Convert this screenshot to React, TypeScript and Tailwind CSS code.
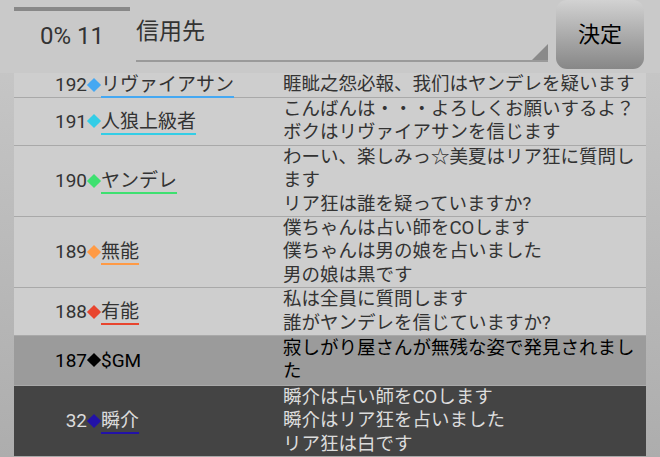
type Row = {
  no: number;
  color: string;
  name: string;
  lines: string[];
  kind?: "gm" | "dark";
  h?: string;
};

const rows: Row[] = [
  { no: 192, color: "decoration-[#45a8f2]", name: "リヴァイアサン", lines: ["睚眦之怨必報、我们はヤンデレを疑います"], h: "h-[25px]" },
  { no: 191, color: "decoration-[#33cde6]", name: "人狼上級者", lines: ["こんばんは・・・よろしくお願いするよ？", "ボクはリヴァイアサンを信じます"] },
  { no: 190, color: "decoration-[#3ee070]", name: "ヤンデレ", lines: ["わーい、楽しみっ☆美夏はリア狂に質問します", "リア狂は誰を疑っていますか?"] },
  { no: 189, color: "decoration-[#ff9a45]", name: "無能", lines: ["僕ちゃんは占い師をCOします", "僕ちゃんは男の娘を占いました", "男の娘は黒です"] },
  { no: 188, color: "decoration-[#e8452e]", name: "有能", lines: ["私は全員に質問します", "誰がヤンデレを信じていますか?"] },
  { no: 187, color: "", name: "$GM", lines: ["寂しがり屋さんが無残な姿で発見されました"], kind: "gm" },
  { no: 32, color: "decoration-[#2212a8]", name: "瞬介", lines: ["瞬介は占い師をCOします", "瞬介はリア狂を占いました", "リア狂は白です"], kind: "dark" },
];

const diamond: Record<number, string> = {
  192: "bg-[#45a8f2]",
  191: "bg-[#33cde6]",
  190: "bg-[#3ee070]",
  189: "bg-[#ff9a45]",
  188: "bg-[#e8452e]",
  187: "bg-black",
  32: "bg-[#2212a8]",
};

function LogRow({ row }: { row: Row }) {
  const bg =
    row.kind === "gm"
      ? "bg-[#9b9b9b] text-black py-[1px]"
      : row.kind === "dark"
        ? "bg-[#444444] text-[#dcdcdc]"
        : "bg-[#cecece] text-[#333333]";
  return (
    <div className={`flex border-b border-[#a9a9a9] ${bg} ${row.h ?? ""}`}>
      <div className="flex items-center w-[269px] shrink-0 text-[19px]">
        <span className="w-[73px] text-right">{row.no}</span>
        <span className={`inline-block w-[10px] h-[10px] rotate-45 mx-[2px] ${diamond[row.no]}`} />
        {row.kind === "gm" ? (
          <span>{row.name}</span>
        ) : (
          <span className={`underline decoration-2 underline-offset-[5px] ${row.color}`}>{row.name}</span>
        )}
      </div>
      <div className="w-[363px] flex flex-col justify-center">
        {row.lines.map((l) => (
          <div key={l}>{l}</div>
        ))}
      </div>
    </div>
  );
}

export default function App() {
  return (
    <div
      className="w-[660px] h-[457px] overflow-hidden bg-gradient-to-b from-[#cacaca] to-[#adadad] text-[18.5px] leading-[23.4px]"
      style={{ fontFamily: 'Roboto, "Noto Sans CJK JP", sans-serif' }}
    >
      {/* Header */}
      <div className="flex h-[73px] bg-[#c9c9c9]">
        <div className="w-[122px] pl-[14px] pt-[7px] shrink-0">
          <div className="h-[4px] w-[116px] bg-[#888888]" />
          <div className="text-[24px] text-[#333333] pl-[26px] pt-[14px]">0% 11</div>
        </div>
        <div className="relative w-[412px] ml-[14px] h-[62px] border-b-2 border-[#9a9a9a]">
          <div className="text-[23px] text-[#333333] pt-[20px]">信用先</div>
          <div className="absolute right-0 bottom-0 w-0 h-0 border-l-[16px] border-l-transparent border-b-[16px] border-b-[#8a8a8a]" />
        </div>
        <button className="ml-[8px] w-[88px] h-[69px] rounded-[11px] bg-gradient-to-b from-[#d2d2d2] to-[#878787] text-[22px] text-black">
          決定
        </button>
      </div>

      {/* Log list */}
      <div className="ml-[14px] w-[632px]">
        {rows.map((r) => (
          <LogRow key={r.no} row={r} />
        ))}
      </div>
    </div>
  );
}
